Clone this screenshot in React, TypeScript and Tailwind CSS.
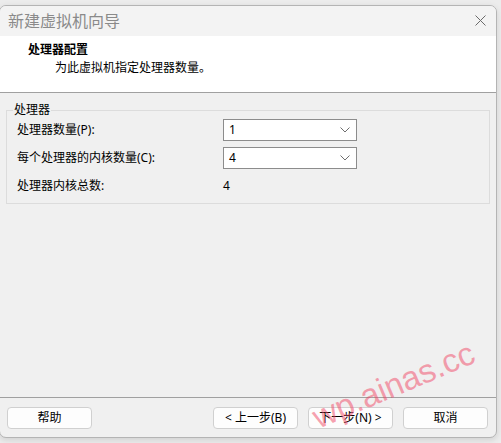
import React from 'react';

const Select: React.FC<{ value: string }> = ({ value }) => (
  <div className="flex h-[22px] w-[134px] items-center justify-between border border-[#8c8c8c] bg-white pl-[5px] pr-[6px]">
    <span className="text-[12px] leading-none text-black">{value}</span>
    <svg width="10" height="6" viewBox="0 0 10 6" fill="none">
      <path d="M0.5 0.5 L5 5 L9.5 0.5" stroke="#6e6e6e" strokeWidth="1" />
    </svg>
  </div>
);

const Button: React.FC<{ label: string; className?: string }> = ({ label, className }) => (
  <button
    type="button"
    className={`flex h-[22px] w-[85px] items-center justify-center rounded-[4px] border border-[#d0d0d0] bg-[#fdfdfd] text-[12px] leading-none text-black ${className ?? ''}`}
  >
    {label}
  </button>
);

const App: React.FC = () => {
  return (
    <div className="relative h-[443px] w-[501px] overflow-hidden bg-[#ececec] font-['Noto_Sans','Noto_Sans_CJK_SC',sans-serif]">
      <div className="ml-[-1px] mt-[5px] flex h-[433px] w-[498px] flex-col overflow-hidden rounded-[7px] border border-[#b4b4b4] bg-[#f0f0f0] shadow-[0_2px_6px_rgba(0,0,0,0.12)]">
        {/* title bar */}
        <div className="flex h-[30px] items-center justify-between bg-[#f3f3f3] pl-[8px] pr-[10px]">
          <span className="text-[16px] leading-none text-[#8a8a8a]">新建虚拟机向导</span>
          <svg width="11" height="11" viewBox="0 0 11 11" fill="none" className="mb-[1px]">
            <path d="M0.5 0.5 L10.5 10.5 M10.5 0.5 L0.5 10.5" stroke="#6a6a6a" strokeWidth="1" />
          </svg>
        </div>

        {/* header */}
        <div className="h-[57px] border-b border-[#a0a0a0] bg-white pl-[28px] pt-[6px]">
          <div className="text-[12px] font-bold leading-[16px] text-black">处理器配置</div>
          <div className="mt-[2px] pl-[27px] text-[12px] leading-[16px] text-black">为此虚拟机指定处理器数量。</div>
        </div>

        {/* body */}
        <div className="flex-1 px-[6px] pt-[9px]">
          <fieldset className="border border-[#dcdcdc] px-[10px] pb-[6px] pt-[1px]">
            <legend className="ml-[-4px] px-[1px] text-[12px] leading-[16px] text-black">处理器</legend>
            <div className="flex flex-col gap-[6px]">
              <div className="flex h-[22px] items-center">
                <span className="w-[206px] text-[12px] text-black">处理器数量(P):</span>
                <Select value="1" />
              </div>
              <div className="flex h-[22px] items-center">
                <span className="w-[206px] text-[12px] text-black">每个处理器的内核数量(C):</span>
                <Select value="4" />
              </div>
              <div className="flex h-[22px] items-center">
                <span className="w-[206px] text-[12px] text-black">处理器内核总数:</span>
                <span className="text-[12px] text-black">4</span>
              </div>
            </div>
          </fieldset>
        </div>

        {/* footer */}
        <div className="flex h-[40px] items-start border-t border-[#a0a0a0] pl-[7px] pt-[9px]">
          <Button label="帮助" />
          <div className="ml-[121px] flex gap-[10px]">
            <Button label="< 上一步(B)" className="w-[84px]" />
            <Button label="下一步(N) >" />
            <Button label="取消" />
          </div>
        </div>
      </div>

      {/* watermark */}
      <span className="pointer-events-none absolute left-[314px] top-[402px] origin-left rotate-[-23deg] font-['Liberation_Sans',sans-serif] text-[33px] leading-none text-[rgba(240,70,100,0.5)]">
        wp.ainas.cc
      </span>
    </div>
  );
};

export default App;
